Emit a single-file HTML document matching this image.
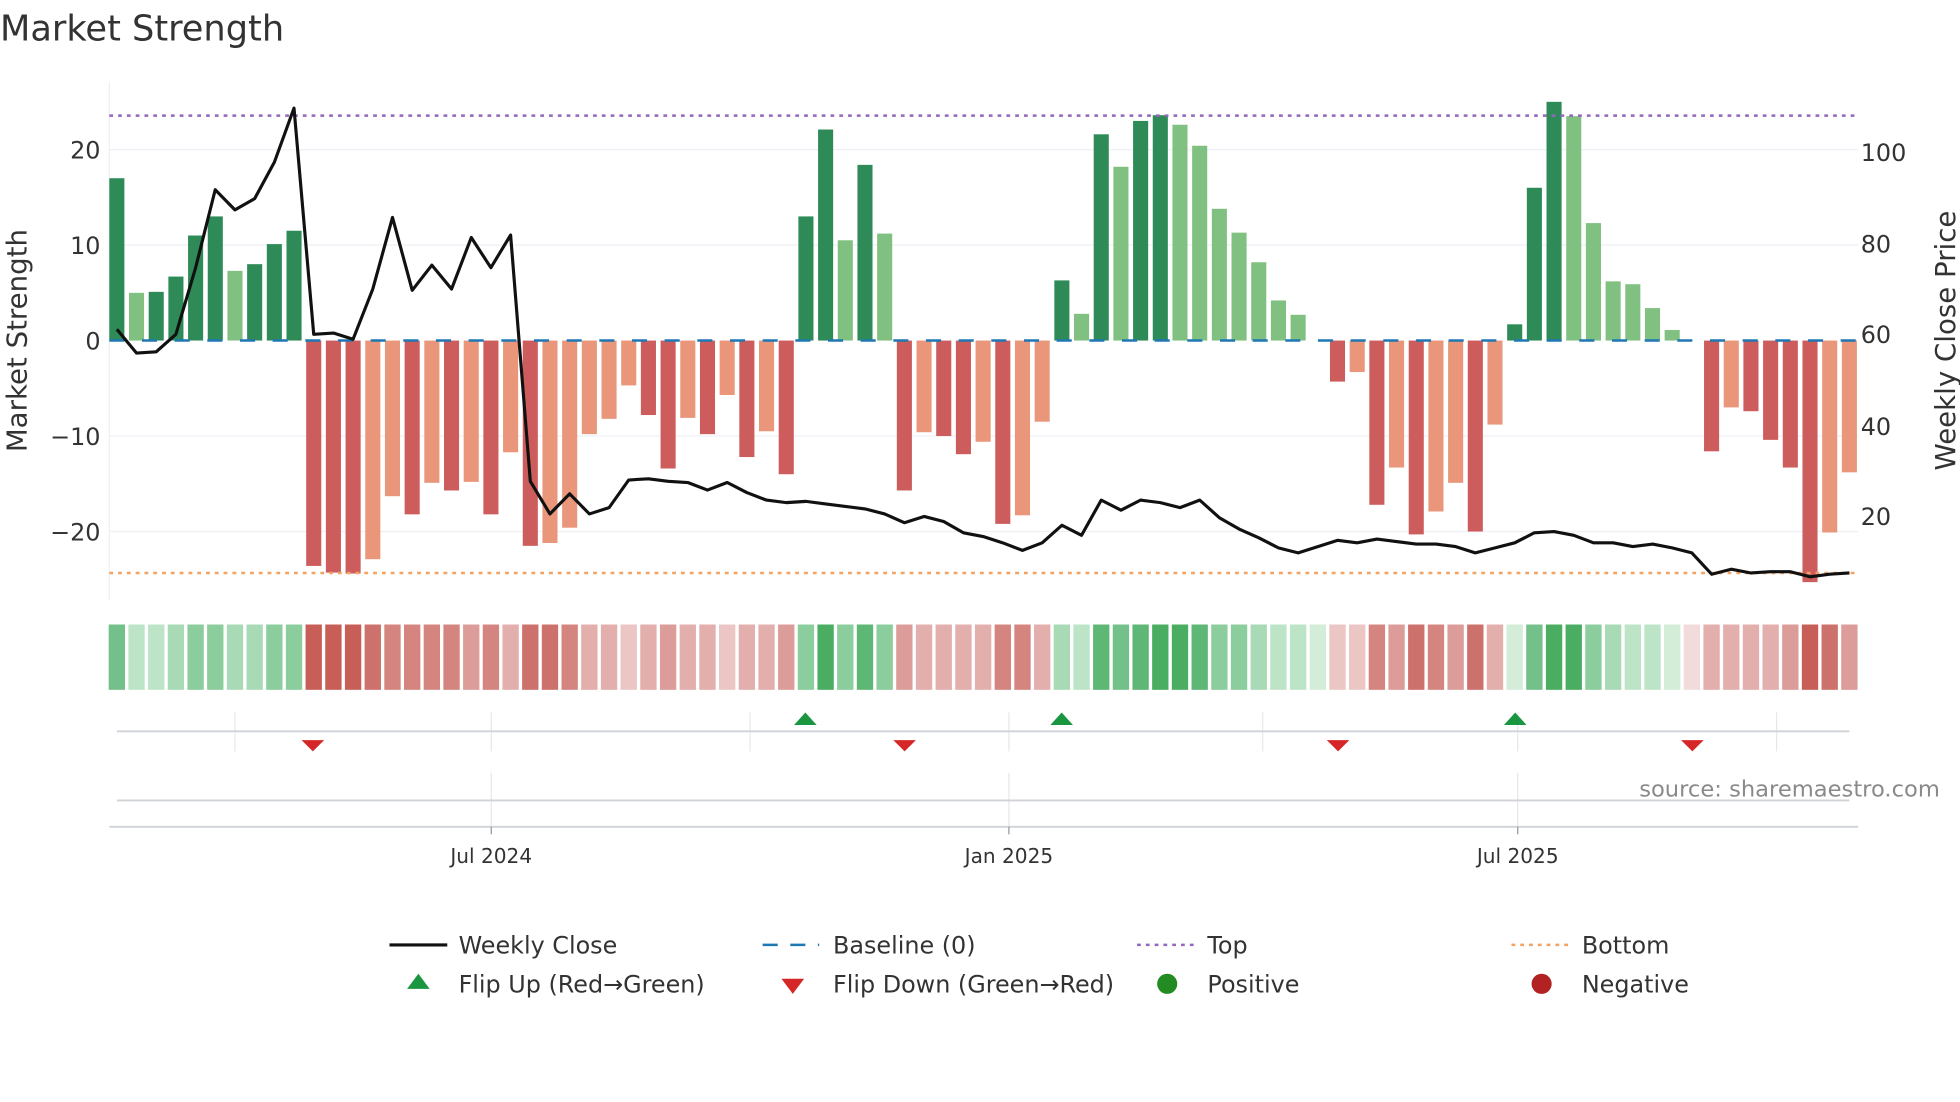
<!DOCTYPE html>
<html><head><meta charset="utf-8"><style>
html,body{margin:0;padding:0;background:#fff;width:1960px;height:1102px;overflow:hidden}
svg{display:block}
text{font-family:"DejaVu Sans","Liberation Sans",sans-serif;fill:#333}
</style></head><body>
<svg id="s" width="1960" height="1102" viewBox="0 0 1560 877" xmlns="http://www.w3.org/2000/svg">
<rect width="1560" height="877" fill="#fff"/>
<text x="0" y="32" font-size="28">Market Strength</text>
<g stroke="#eef0f5" stroke-width="1">
<line x1="87" x2="1479" y1="119" y2="119"/><line x1="87" x2="1479" y1="195" y2="195"/>
<line x1="87" x2="1479" y1="347" y2="347"/><line x1="87" x2="1479" y1="423" y2="423"/>
<line x1="87" x2="87" y1="65" y2="478"/>
</g>
<g font-size="19" text-anchor="end">
<text x="80" y="126">20</text><text x="80" y="202">10</text><text x="80" y="278">0</text>
<text x="80" y="354">−10</text><text x="80" y="430">−20</text>
</g>
<g font-size="19">
<text x="1481" y="128">100</text><text x="1481" y="201">80</text><text x="1481" y="273">60</text>
<text x="1481" y="346">40</text><text x="1481" y="418">20</text>
</g>
<text font-size="22" transform="translate(21,271) rotate(-90)" text-anchor="middle">Market Strength</text>
<text font-size="22" transform="translate(1556,271) rotate(-90)" text-anchor="middle">Weekly Close Price</text>
<g id="bars"></g>
<line x1="87" x2="1479" y1="92" y2="92" stroke="#9467bd" stroke-width="2" stroke-dasharray="3,4"/>
<line x1="87" x2="1479" y1="456" y2="456" stroke="#f4a261" stroke-width="2" stroke-dasharray="3,4"/>
<line x1="87" x2="1479" y1="271" y2="271" stroke="#1f77b4" stroke-width="2" stroke-dasharray="12,14"/>
<polyline id="ln" fill="none" stroke="#111" stroke-width="2.5" stroke-linejoin="round"/>
<g id="strip"></g>
<g stroke="#e6e8ec" stroke-width="1">
<line x1="187" x2="187" y1="567" y2="598"/><line x1="391" x2="391" y1="567" y2="598"/>
<line x1="597" x2="597" y1="567" y2="598"/><line x1="803" x2="803" y1="567" y2="598"/>
<line x1="1005" x2="1005" y1="567" y2="598"/><line x1="1208" x2="1208" y1="567" y2="598"/>
<line x1="1414" x2="1414" y1="567" y2="598"/>
<line x1="391" x2="391" y1="615" y2="660"/><line x1="803" x2="803" y1="615" y2="660"/><line x1="1208" x2="1208" y1="615" y2="660"/>
</g>
<line x1="93" x2="1472" y1="582" y2="582" stroke="#cfd3d8" stroke-width="1.5"/>
<line x1="93" x2="1472" y1="637" y2="637" stroke="#cfd3d8" stroke-width="1.5"/>
<line x1="87" x2="1479" y1="658" y2="658" stroke="#cfd3d8" stroke-width="1.5"/>
<g stroke="#999" stroke-width="1"><line x1="391" x2="391" y1="658" y2="664"/><line x1="803" x2="803" y1="658" y2="664"/><line x1="1208" x2="1208" y1="658" y2="664"/></g>
<g fill="#1a9641">
<path d="M632 577 L641 567 L650 577Z"/><path d="M836 577 L845 567 L854 577Z"/><path d="M1197 577 L1206 567 L1215 577Z"/>
</g>
<g fill="#d62728">
<path d="M240 589 L258 589 L249 598Z"/><path d="M711 589 L729 589 L720 598Z"/><path d="M1056 589 L1074 589 L1065 598Z"/><path d="M1338 589 L1356 589 L1347 598Z"/>
</g>
<text x="1544" y="634" font-size="18" text-anchor="end" style="fill:#8a8a8a">source: sharemaestro.com</text>
<g font-size="16" text-anchor="middle">
<text x="391" y="687">Jul 2024</text><text x="803" y="687">Jan 2025</text><text x="1208" y="687">Jul 2025</text>
</g>
<g font-size="19">
<line x1="310" x2="356" y1="752" y2="752" stroke="#111" stroke-width="2.5"/>
<text x="365" y="759">Weekly Close</text>
<line x1="607" x2="652" y1="752" y2="752" stroke="#1f77b4" stroke-width="2" stroke-dasharray="12,10"/>
<text x="663" y="759">Baseline (0)</text>
<line x1="905" x2="950" y1="752" y2="752" stroke="#9467bd" stroke-width="2" stroke-dasharray="3,4"/>
<text x="961" y="759">Top</text>
<line x1="1203" x2="1248" y1="752" y2="752" stroke="#f4a261" stroke-width="2" stroke-dasharray="3,4"/>
<text x="1259" y="759">Bottom</text>
<path d="M324 787 L333 775 L342 787Z" fill="#1a9641"/>
<text x="365" y="790">Flip Up (Red→Green)</text>
<path d="M622 779 L640 779 L631 791Z" fill="#d62728"/>
<text x="663" y="790">Flip Down (Green→Red)</text>
<circle cx="929" cy="783" r="8" fill="#228b22"/>
<text x="961" y="790">Positive</text>
<circle cx="1227" cy="783" r="8" fill="#b22222"/>
<text x="1259" y="790">Negative</text>
</g>
</svg>
<script>
var NS="http://www.w3.org/2000/svg";
function el(t,a,p){var e=document.createElementNS(NS,t);for(var k in a)e.setAttribute(k,a[k]);p.appendChild(e);return e;}
// value, dark(1)/light(0)
var B=[[17,1],[5,0],[5.1,1],[6.7,1],[11,1],[13,1],[7.3,0],[8,1],[10.1,1],[11.5,1],
[-23.6,1],[-24.3,1],[-24.4,1],[-22.9,0],[-16.3,0],[-18.2,1],[-14.9,0],[-15.7,1],[-14.8,0],[-18.2,1],[-11.7,0],[-21.5,1],[-21.2,0],[-19.6,0],[-9.8,0],[-8.2,0],[-4.7,0],[-7.8,1],[-13.4,1],[-8.1,0],[-9.8,1],[-5.7,0],[-12.2,1],[-9.5,0],[-14,1],
[13,1],[22.1,1],[10.5,0],[18.4,1],[11.2,0],
[-15.7,1],[-9.6,0],[-10,1],[-11.9,1],[-10.6,0],[-19.2,1],[-18.3,0],[-8.5,0],
[6.3,1],[2.8,0],[21.6,1],[18.2,0],[23,1],[23.6,1],[22.6,0],[20.4,0],[13.8,0],[11.3,0],[8.2,0],[4.2,0],[2.7,0],[0,0],
[-4.3,1],[-3.3,0],[-17.2,1],[-13.3,0],[-20.3,1],[-17.9,0],[-14.9,0],[-20,1],[-8.8,0],
[1.7,1],[16,1],[25,1],[23.5,0],[12.3,0],[6.2,0],[5.9,0],[3.4,0],[1.1,0],[0,0],
[-11.6,1],[-7,0],[-7.4,1],[-10.4,1],[-13.3,1],[-25.3,1],[-20.1,0],[-13.8,0]];
var G=["","#d4edd9","#bde4c7","#a8dab5","#8ccd9d","#74c08a","#5fb776","#4aad61"];
var R=["","#f2dcdb","#ebc6c4","#e3afad","#dc9c99","#d5857f","#cd716c","#c75e58"];
var S="G5 G2 G2 G3 G4 G4 G3 G3 G4 G4 R7 R7 R7 R6 R5 R5 R5 R5 R4 R5 R3 R6 R6 R5 R3 R3 R2 R3 R4 R3 R3 R2 R3 R3 R4 G4 G7 G4 G6 G4 R4 R3 R3 R3 R3 R5 R5 R3 G3 G2 G6 G5 G6 G7 G7 G6 G4 G4 G3 G2 G2 G1 R2 R2 R5 R4 R6 R5 R4 R6 R3 G1 G5 G7 G7 G4 G3 G2 G2 G1 R1 R3 R3 R3 R3 R4 R7 R6 R4".split(" ");
var L=[262,281,280,266,213,151,167,158,129,86,266,265,270,230,173,231,211,230,189,213,187,383,409,393,409,404,382,381,383,384,390,384,392,398,400,399,401,403,405,409,416,411,415,424,427,432,438,432,418,426,398,406,398,400,404,398,412,421,428,436,440,435,430,432,429,431,433,433,435,440,436,432,424,423,426,432,432,435,433,436,440,457,453,456,455,455,459,457,456];
var bg=document.getElementById("bars"),sg=document.getElementById("strip"),pts=[];
for(var i=0;i<89;i++){
 var x=93+i*15.67,v=B[i][0],d=B[i][1];
 if(v!==0){var y=271-v*7.6;var c=v>0?(d?"#2e8b57":"#80c080"):(d?"#cd5c5c":"#e9967a");
 el("rect",{x:(x-6).toFixed(2),y:Math.min(y,271).toFixed(2),width:12,height:Math.abs(271-y).toFixed(2),fill:c},bg);}
 var s=S[i];el("rect",{x:(x-6.5).toFixed(2),y:497,width:13,height:52,fill:(s[0]=="G"?G:R)[+s[1]]},sg);
 pts.push(x.toFixed(1)+","+L[i]);
}
document.getElementById("ln").setAttribute("points",pts.join(" "));
</script>
</body></html>
